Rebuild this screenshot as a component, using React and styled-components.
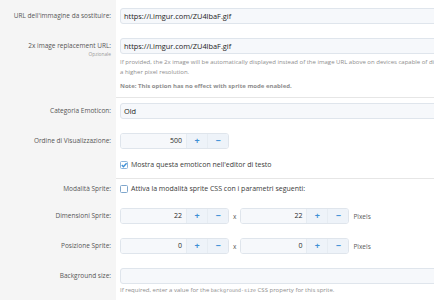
import React from 'react';
import styled, { createGlobalStyle } from 'styled-components';

const GlobalStyle = createGlobalStyle`
  html, body {
    margin: 0;
    padding: 0;
    background: #fff;
    overflow: hidden;
  }
  body {
    font-family: 'Open Sans', 'Noto Sans', sans-serif;
    color: #141414;
  }
`;

const Form = styled.div`
  width: 640px;
  padding-top: 1px;
  background: linear-gradient(to right, #f5f5f5 116px, #fff 116px);
`;

const Row = styled.div`
  display: grid;
  grid-template-columns: 116px 1fr;
`;

const Label = styled.div`
  padding: ${(p) => (p.$sep ? 6 : 7)}px 5px 0 0;
  text-align: right;
  font-size: 6.5px;
  line-height: ${(p) => (p.$line ? p.$line : 16)}px;
  color: #555;
`;

const Hint = styled.div`
  font-size: 4.8px;
  line-height: 6px;
  color: #9a9a9a;
  margin-top: -3px;
`;

const Field = styled.div`
  padding: ${(p) => p.$pt ?? 7}px 0 ${(p) => p.$pb ?? 7}px 4px;
  border-top: ${(p) => (p.$sep ? '1px solid #e6e6e6' : 'none')};
`;

const TextInput = styled.div`
  height: 16px;
  box-sizing: border-box;
  border: 1px solid #dfe5ec;
  border-radius: 3px;
  background: #f6f8fb;
  padding: 0 3px;
  font-size: 7.4px;
  line-height: 14px;
  color: #1d1d1d;
`;

const Explain = styled.div`
  font-size: 6px;
  line-height: 10px;
  color: #8e8e8e;
  white-space: nowrap;
  font-weight: ${(p) => (p.$bold ? 700 : 400)};
  margin-top: ${(p) => (p.$gap ? p.$gap : 3)}px;

  code {
    font-family: 'DejaVu Sans Mono', monospace;
    font-size: 5px;
  }
`;

const Inline = styled.div`
  display: flex;
  align-items: center;
  gap: 3px;
`;

const NumberBox = styled.div`
  display: flex;
  width: 109px;
  height: 16px;
  box-sizing: border-box;
  border: 1px solid #dfe5ec;
  border-radius: 3px;
  overflow: hidden;
`;

const NumberValue = styled.div`
  flex: 1;
  background: #f6f8fb;
  text-align: right;
  padding-right: 4px;
  font-size: 7px;
  line-height: 14px;
  color: #2a2a2a;
`;

const StepButton = styled.div`
  width: 20px;
  background: #eef3f9;
  border-left: 1px solid #e6ecf2;
  color: #3d8fd6;
  font-weight: 700;
  font-size: 9px;
  line-height: 14px;
  text-align: center;
`;

const Sep = styled.span`
  font-size: 6.5px;
  color: #5a5a5a;
  padding: 0 1px;
`;

const Check = styled.label`
  display: flex;
  align-items: center;
  gap: 3px;
  font-size: 7px;
  line-height: 10px;
  color: #3a3a3a;
`;

const Box = ({ checked }) => (
  <svg width="8" height="8" viewBox="0 0 8 8">
    <rect x="0.5" y="0.5" width="7" height="7" rx="1" fill="#fff" stroke={checked ? '#8db5dc' : '#7fa6cc'} />
    {checked && <path d="M1.8 4.1 L3.4 5.7 L6.6 2.2" fill="none" stroke="#3d8fd6" strokeWidth="1.4" />}
  </svg>
);

const NumberInput = ({ value }) => (
  <NumberBox>
    <NumberValue>{value}</NumberValue>
    <StepButton>+</StepButton>
    <StepButton>−</StepButton>
  </NumberBox>
);

const URL = 'https://i.imgur.com/ZU4lbaF.gif';

export default function App() {
  return (
    <>
      <GlobalStyle />
      <Form>
        <Row>
          <Label>URL dell'immagine da sostituire:</Label>
          <Field>
            <TextInput>{URL}</TextInput>
          </Field>
        </Row>
        <Row>
          <Label>
            2x image replacement URL:
            <Hint>Opzionale</Hint>
          </Label>
          <Field $pb={6}>
            <TextInput>{URL}</TextInput>
            <Explain>
              If provided, the 2x image will be automatically displayed instead of the image URL above on devices capable of displaying
              <br />a higher pixel resolution.
            </Explain>
            <Explain $bold $gap={4}>Note: This option has no effect with sprite mode enabled.</Explain>
          </Field>
        </Row>
        <Row>
          <Label $sep>Categoria Emoticon:</Label>
          <Field $sep $pt={5}>
            <TextInput>Old</TextInput>
          </Field>
        </Row>
        <Row>
          <Label>Ordine di Visualizzazione:</Label>
          <Field>
            <NumberInput value={500} />
          </Field>
        </Row>
        <Row>
          <Label />
          <Field $pt={4} $pb={8}>
            <Check>
              <Box checked />
              Mostra questa emoticon nell'editor di testo
            </Check>
          </Field>
        </Row>
        <Row>
          <Label $sep $line={10}>Modalità Sprite:</Label>
          <Field $sep $pt={5}>
            <Check>
              <Box />
              Attiva la modalità sprite CSS con i parametri seguenti:
            </Check>
          </Field>
        </Row>
        <Row>
          <Label>Dimensioni Sprite:</Label>
          <Field>
            <Inline>
              <NumberInput value={22} />
              <Sep>x</Sep>
              <NumberInput value={22} />
              <Sep>Pixels</Sep>
            </Inline>
          </Field>
        </Row>
        <Row>
          <Label>Posizione Sprite:</Label>
          <Field>
            <Inline>
              <NumberInput value={0} />
              <Sep>x</Sep>
              <NumberInput value={0} />
              <Sep>Pixels</Sep>
            </Inline>
          </Field>
        </Row>
        <Row>
          <Label>Background size:</Label>
          <Field>
            <TextInput />
            <Explain $gap={1}>
              If required, enter a value for the <code>background-size</code> CSS property for this sprite.
            </Explain>
          </Field>
        </Row>
      </Form>
    </>
  );
}
